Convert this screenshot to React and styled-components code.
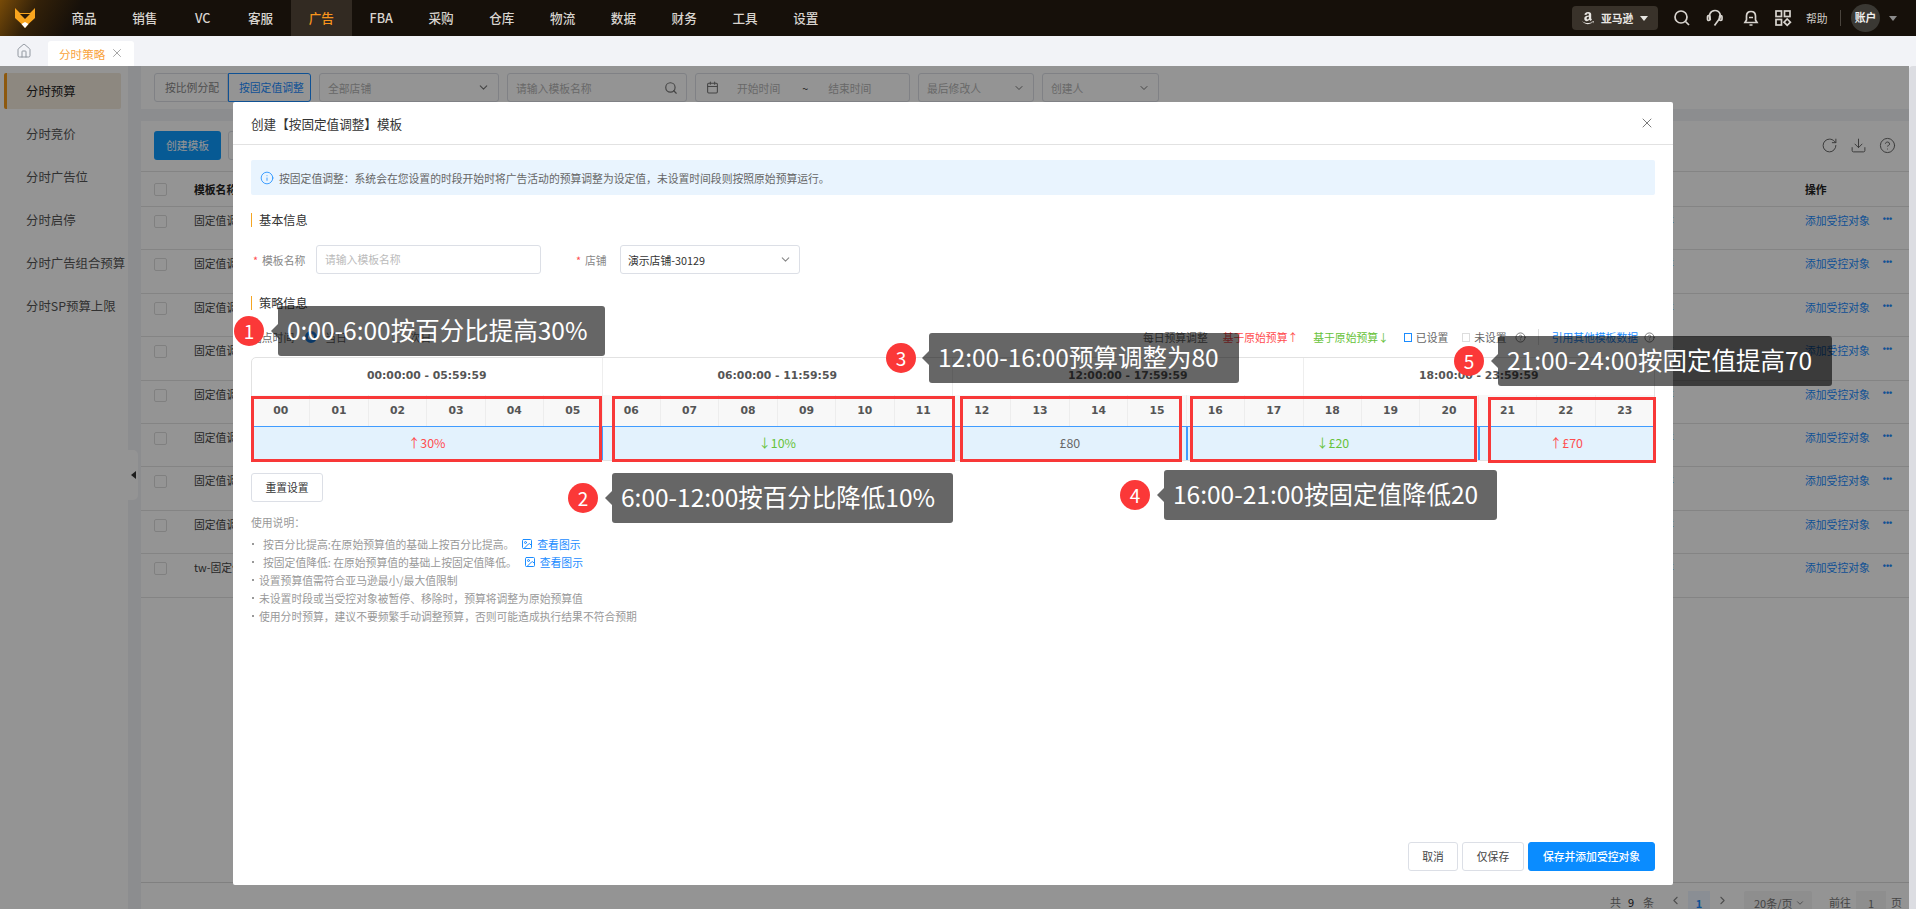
import React from "react";
import styled, { createGlobalStyle } from "styled-components";
import {
  Calendar,
  ChevronDown,
  ChevronLeft,
  ChevronRight,
  CircleHelp,
  Download,
  House,
  Image as ImageIcon,
  Info,
  RotateCw,
  Search,
  X
} from "lucide-react";
import { FaAmazon } from "react-icons/fa";

const GlobalStyle = createGlobalStyle`
  html, body {
    margin: 0;
    padding: 0;
    height: 100%;
    overflow: hidden;
    background: #f2f3f7;
  }
  body {
    font-family: "Noto Sans CJK SC", "Noto Sans", sans-serif;
    font-size: 10.8px;
    color: #333;
  }
  * { box-sizing: border-box; }
`;

const Page = styled.div`
  position: relative;
  width: 1916px;
  height: 909px;
  display: flex;
  flex-direction: column;
  overflow: hidden;
`;

/* top navigation */
const TopBar = styled.header`
  height: 36px;
  flex: none;
  display: flex;
  align-items: center;
  color: #d8d4cf;
  background:
    linear-gradient(118deg, rgba(125, 78, 8, 0.95) 0, rgba(70, 44, 8, 0.6) 34px, rgba(23, 16, 8, 0) 74px),
    #16100a;
`;

const Logo = styled.svg`
  width: 20px;
  height: 20px;
  margin-left: 15px;
  margin-right: 18.6px;
  flex: none;
`;

const NavItem = styled.div`
  min-width: 55px;
  padding: 0 17.8px;
  height: 36px;
  line-height: 36px;
  text-align: center;
  font-size: 12.6px;
  font-weight: 500;
  color: ${p => (p.$active ? "#f7941d" : "#d8d4cf")};
  background: ${p => (p.$active ? "#322a22" : "transparent")};
`;

const TopRight = styled.div`
  margin-left: auto;
  display: flex;
  align-items: center;
  height: 36px;
`;

const PlatformPill = styled.div`
  width: 86px;
  height: 24px;
  margin-right: 15px;
  border-radius: 4px;
  background: #39322a;
  display: flex;
  align-items: center;
  padding-left: 9px;
  color: #e8e6e2;
  font-size: 10.8px;
  font-weight: 700;
`;

const PillLabel = styled.span`
  margin: 0 7px 0 6px;
`;

const Caret = styled.i`
  display: block;
  width: 0;
  height: 0;
  border-left: 4px solid transparent;
  border-right: 4px solid transparent;
  border-top: 5px solid ${p => p.$color || "#e8e6e2"};
`;

const TopIcon = styled.svg`
  width: 18px;
  height: 18px;
  margin-right: ${p => p.$gap}px;
  fill: none;
  stroke: #d8d4cf;
  stroke-width: 1.7;
  flex: none;
`;

const HelpText = styled.span`
  color: #cfcbc6;
  font-size: 10.8px;
  width: 23px;
`;

const TopDivider = styled.i`
  width: 1px;
  height: 16px;
  background: #4a443d;
  margin: 0 10px 0 11px;
`;

const Avatar = styled.div`
  width: 29px;
  height: 28px;
  border-radius: 50%;
  background: #3a3833;
  text-align: center;
  line-height: 26px;
  font-size: 10.8px;
  font-weight: 700;
  color: #eee;
  margin-right: 9px;
`;

const AvatarSlot = styled.div`
  width: 27px;
`;

/* tab strip */
const TabBar = styled.div`
  height: 30px;
  flex: none;
  display: flex;
  align-items: flex-end;
  background: #f2f3f7;
  color: #8a9099;
`;

const HomeSlot = styled.div`
  width: 48px;
  height: 30px;
  display: flex;
  align-items: center;
  justify-content: center;
`;

const Tab = styled.div`
  width: 86px;
  height: 25px;
  background: #fff;
  border-radius: 3px 3px 0 0;
  color: #f9a33c;
  font-size: 11.6px;
  display: flex;
  align-items: center;
  padding-left: 11px;
  gap: 5px;
  svg { color: #8b8b8b; margin-top: -2px; }
`;

/* page behind the dialog */
const Body = styled.div`
  flex: 1;
  display: flex;
  min-height: 0;
`;

const Sidebar = styled.nav`
  width: 128px;
  flex: none;
  background: #fff;
  padding: 7px 0 0 4px;
  display: flex;
  flex-direction: column;
  gap: 7px;
`;

const SideItem = styled.div`
  width: 117px;
  height: 36px;
  line-height: 36px;
  font-size: 12.4px;
  white-space: nowrap;
  padding-left: ${p => (p.$active ? "19px" : "22px")};
  color: ${p => (p.$active ? "#222" : "#555")};
  background: ${p => (p.$active ? "#f3eadc" : "transparent")};
  border-left: ${p => (p.$active ? "3px solid #f39a1a" : "0")};
  border-radius: 2px;
`;

const CollapseHandle = styled.div`
  position: absolute;
  left: 128px;
  top: 450px;
  width: 10px;
  height: 50px;
  background: #fff;
  border-radius: 0 5px 5px 0;
  display: flex;
  align-items: center;
  justify-content: center;
`;

const CollapseArrow = styled.i`
  width: 0;
  height: 0;
  border-top: 4px solid transparent;
  border-bottom: 4px solid transparent;
  border-right: 5px solid #333;
`;

const Main = styled.main`
  flex: 1;
  margin-left: 13px;
  min-width: 0;
  display: flex;
  flex-direction: column;
`;

const FilterBar = styled.div`
  height: 43px;
  flex: none;
  background: #fff;
  padding: 7px 13px;
  display: flex;
`;

const Toggle = styled.div`
  height: 29px;
  line-height: 27px;
  padding: 0 10px;
  font-size: 10.8px;
  border: 1px solid ${p => (p.$on ? "#1a8cff" : "#dcdfe6")};
  color: ${p => (p.$on ? "#1a8cff" : "#888")};
  border-radius: ${p => (p.$on ? "0 3px 3px 0" : "3px 0 0 3px")};
  width: ${p => p.$w}px;
  white-space: nowrap;
`;

const Field = styled.div`
  width: ${p => p.$w}px;
  margin-left: 8px;
  height: 29px;
  border: 1px solid #dcdfe6;
  border-radius: 3px;
  padding: 0 8px;
  display: flex;
  align-items: center;
  justify-content: space-between;
  color: #b5b5b5;
  font-size: 10.8px;
  svg { color: #777; flex: none; }
`;

const DateField = styled(Field)`
  justify-content: flex-start;
  padding-left: 10px;
  color: #b5b5b5;
`;

const DateText = styled.span`
  margin-left: ${p => p.$gap}px;
  color: ${p => (p.$dark ? "#444" : "#b5b5b5")};
`;

const ListPanel = styled.section`
  margin-top: 12px;
  flex: 1;
  min-height: 0;
  background: #fff;
  display: flex;
  flex-direction: column;
`;

const ListTools = styled.div`
  height: 50px;
  flex: none;
  padding: 10px 13px 0;
  display: flex;
  gap: 7px;
  color: #666;
`;

const CreateButton = styled.div`
  width: 67px;
  height: 29px;
  border-radius: 3px;
  background: #0d9bff;
  color: #fff;
  font-size: 10.8px;
  line-height: 29px;
  text-align: center;
`;

const GhostButton = styled.div`
  width: 67px;
  height: 29px;
  border: 1px solid #dcdfe6;
  border-radius: 3px;
`;

const ToolIcons = styled.div`
  margin-left: auto;
  display: flex;
  align-items: center;
  height: 29px;
  gap: 12px;
  color: #666;
`;

const Row = styled.div`
  height: ${p => (p.$head ? "35px" : "43.4px")};
  flex: none;
  border-top: 1px solid #e4e4e4;
  display: flex;
  align-items: ${p => (p.$head ? "center" : "flex-start")};
  padding-left: 13px;
  padding-top: ${p => (p.$head ? "0" : "5px")};
  font-size: 10.8px;
  font-weight: ${p => (p.$head ? 700 : 400)};
  color: ${p => (p.$head ? "#222" : "#444")};
`;

const Check = styled.i`
  display: block;
  width: 13px;
  height: 13px;
  border: 1px solid #ddd;
  border-radius: 2px;
  flex: none;
  margin-top: ${p => (p.$head ? "0" : "3px")};
`;

const NameCell = styled.div`
  margin-left: 27px;
  width: 1469px;
  flex: none;
  white-space: nowrap;
`;

const LinkStub = styled.span`
  width: 12px;
  flex: none;
  color: #1a8cff;
  white-space: nowrap;
`;

const ActionCell = styled.div`
  margin-left: 130px;
  display: flex;
  align-items: flex-start;
  color: ${p => (p.$head ? "inherit" : "#1a8cff")};
  white-space: nowrap;
`;

const Dots = styled.span`
  margin: 2px 0 0 13px;
  font-family: "Liberation Sans", sans-serif;
  font-size: 9px;
  font-weight: 700;
  line-height: 10px;
`;

const TableEnd = styled.div`
  border-top: 1px solid #e4e4e4;
`;

const Pagination = styled.div`
  height: 27px;
  flex: none;
  background: #fff;
  border-top: 1px solid #dcdcdc;
  display: flex;
  align-items: flex-start;
  justify-content: flex-end;
  padding: 8px 7px 0 0;
  font-size: 11px;
  color: #777;
`;

const PageText = styled.span`
  margin-top: 3px;
  margin-left: ${p => p.$gap || 0}px;
  color: ${p => (p.$dark ? "#222" : "#777")};
`;

const PageBtn = styled.div`
  width: 22px;
  height: 24px;
  margin: 0 6px;
  background: #eef5ff;
  color: #1a8cff;
  font-weight: 700;
  text-align: center;
  line-height: 24px;
`;

const PageSelect = styled.div`
  width: 68px;
  height: 24px;
  margin: 0 17px 0 15px;
  background: #f4f4f5;
  display: flex;
  align-items: center;
  gap: 2px;
  padding-left: 10px;
  border-radius: 2px;
`;

const PageInput = styled.div`
  width: 30px;
  height: 24px;
  margin: 0 5px;
  background: #f4f4f5;
  text-align: center;
  line-height: 24px;
`;

const PageSlot = styled.div`
  margin: 3px 0 0 ${p => p.$gap}px;
  color: #888;
`;

const ScrollTrack = styled.div`
  width: 7px;
  flex: none;
  background: #dcdde2;
  border-radius: 4px 0 0 0;
`;

/* dialog */
const Overlay = styled.div`
  position: absolute;
  left: 0;
  right: 7px;
  top: 66px;
  bottom: 0;
  background: rgba(0, 0, 0, 0.42);
`;

const Dialog = styled.div`
  position: absolute;
  left: 233px;
  top: 102px;
  width: 1440px;
  height: 783px;
  background: #fff;
  border-radius: 2px;
  display: flex;
  flex-direction: column;
  padding: 0 18px 14px;
`;

const DialogHead = styled.div`
  height: 43px;
  flex: none;
  margin: 0 -18px;
  padding: 0 18px;
  border-bottom: 1px solid #e2e2e2;
  display: flex;
  align-items: center;
  justify-content: space-between;
  font-size: 12.6px;
  color: #333;
  svg { color: #666; }
`;

const Alert = styled.div`
  margin-top: 15px;
  height: 35px;
  flex: none;
  background: #e9f4fe;
  display: flex;
  align-items: center;
  padding-left: 9px;
  gap: 5px;
  font-size: 10.8px;
  color: #666;
  border-radius: 2px;
  svg { color: #1a8cff; }
`;

const SectionTitle = styled.div`
  margin-top: ${p => p.$top}px;
  height: 14px;
  line-height: 14px;
  flex: none;
  border-left: 1.5px solid #f5a623;
  padding-left: 7px;
  font-size: 12.2px;
  color: #333;
`;

const FormRow = styled.div`
  margin-top: 18px;
  display: flex;
  align-items: center;
  flex: none;
`;

const Label = styled.label`
  width: ${p => p.$w}px;
  font-size: 10.8px;
  color: #888;
  white-space: nowrap;
  &::before {
    content: "*";
    color: #ff4d4f;
    margin: 0 4px 0 2px;
  }
`;

const TextInput = styled.div`
  width: 225px;
  height: 29px;
  border: 1px solid #dcdfe6;
  border-radius: 3px;
  padding-left: 8px;
  line-height: 27px;
  font-size: 10.8px;
  color: #bbb;
  margin-right: 33px;
`;

const StoreSelect = styled.div`
  width: 180px;
  height: 29px;
  border: 1px solid #dcdfe6;
  border-radius: 3px;
  padding: 0 7px;
  display: flex;
  align-items: center;
  justify-content: space-between;
  font-size: 10.8px;
  color: #333;
  svg { color: #888; }
`;

const LegendRow = styled.div`
  margin-top: 15px;
  height: 24px;
  flex: none;
  display: flex;
  align-items: center;
  justify-content: space-between;
  font-size: 10.8px;
`;

const LegendSide = styled.div`
  display: flex;
  align-items: center;
`;

const LegendText = styled.span`
  color: ${p => p.$color || "#666"};
  margin-left: ${p => p.$gap || 0}px;
  white-space: nowrap;
`;

const Radio = styled.i`
  display: block;
  width: 12px;
  height: 12px;
  border-radius: 50%;
  margin-left: ${p => p.$gap}px;
  border: ${p => (p.$on ? "3px solid #1a8cff" : "1px solid #ccc")};
`;

const Swatch = styled.i`
  display: block;
  width: 8px;
  height: 9px;
  margin-left: ${p => p.$gap}px;
  border: 1.5px solid ${p => p.$color};
`;

const LegendDivider = styled.i`
  width: 1px;
  height: 16px;
  background: #ddd;
  margin: 0 13px 0 12px;
`;

const HelpIcon = styled(CircleHelp)`
  color: #777;
  margin-left: ${p => p.$gap}px;
  flex: none;
`;

const Schedule = styled.div`
  margin-top: 8px;
  flex: none;
  border: 1px solid #e2e2e2;
  border-radius: 5px 5px 2px 2px;
  height: 104px;
  overflow: hidden;
`;

const GroupRow = styled.div`
  display: grid;
  grid-template-columns: repeat(4, 1fr);
  height: 37px;
`;

const GroupCell = styled.div`
  border-right: 1px solid #eee;
  font-family: "DejaVu Sans", sans-serif;
  font-weight: 700;
  font-size: 10.8px;
  color: #555;
  text-align: center;
  line-height: 36px;
  &:last-child { border-right: 0; }
`;

const HourRow = styled.div`
  display: grid;
  grid-template-columns: repeat(24, 1fr);
  height: 31px;
  background: #f8f8f8;
`;

const HourCell = styled.div`
  border-right: 1px solid #ededed;
  font-family: "DejaVu Sans", sans-serif;
  font-weight: 700;
  font-size: 10.8px;
  color: #555;
  text-align: center;
  line-height: 31px;
  &:last-child { border-right: 0; }
`;

const ValueRow = styled.div`
  display: grid;
  grid-template-columns: repeat(24, 1fr);
  height: 35px;
`;

const Segment = styled.div`
  grid-column: span ${p => p.$span};
  background: #e3f2fd;
  border: 1px solid #409cff;
  border-left-width: ${p => (p.$first ? 0 : 1)}px;
  text-align: center;
  line-height: 33px;
  font-size: 12.4px;
  color: ${p => p.$color};
`;

const ResetButton = styled.div`
  margin-top: 12px;
  flex: none;
  width: 72px;
  height: 29px;
  border: 1px solid #dcdfe6;
  border-radius: 3px;
  text-align: center;
  line-height: 27px;
  font-size: 10.8px;
  color: #333;
`;

const UsageTitle = styled.div`
  margin-top: 11px;
  height: 18px;
  line-height: 18px;
  font-size: 10.8px;
  color: #999;
  flex: none;
`;

const UsageList = styled.ul`
  margin: 4px 0 0;
  padding: 0;
  list-style: none;
  flex: none;
`;

const UsageItem = styled.li`
  height: 18px;
  line-height: 18px;
  font-size: 10.8px;
  color: #999;
  display: flex;
  align-items: center;
  &::before {
    content: "";
    flex: none;
    width: 2px;
    height: 2px;
    background: #999;
    margin: 0 ${p => (p.$wide ? "9px" : "5px")} 0 1px;
  }
`;

const ViewLink = styled.span`
  display: inline-flex;
  align-items: center;
  gap: 4px;
  margin-left: 7px;
  color: #1a8cff;
`;

const DialogFoot = styled.div`
  margin-top: auto;
  display: flex;
  justify-content: flex-end;
  gap: 4px;
`;

const FootButton = styled.div`
  width: ${p => p.$w}px;
  height: 29px;
  border: 1px solid ${p => (p.$primary ? "#0a8cff" : "#dcdfe6")};
  background: ${p => (p.$primary ? "#0a8cff" : "#fff")};
  color: ${p => (p.$primary ? "#fff" : "#444")};
  font-weight: ${p => (p.$primary ? 500 : 400)};
  border-radius: 3px;
  text-align: center;
  line-height: 27px;
  font-size: 10.8px;
`;

/* red annotations drawn on top of the screenshot */
const RedBox = styled.div`
  position: absolute;
  left: ${p => p.$x}px;
  top: ${p => p.$y}px;
  width: ${p => p.$w}px;
  height: ${p => p.$h}px;
  border: 3px solid #f83838;
`;

const Callout = styled.div`
  position: absolute;
  left: ${p => p.$x}px;
  top: ${p => p.$y}px;
  width: ${p => p.$w}px;
  height: 50px;
  padding-left: 9px;
  border-radius: 3px;
  background: rgba(0, 0, 0, 0.6);
  color: #fff;
  font-size: 24.5px;
  line-height: 48px;
  white-space: nowrap;
  &::before {
    content: "";
    position: absolute;
    left: -7px;
    top: 18px;
    border-top: 7px solid transparent;
    border-bottom: 7px solid transparent;
    border-right: 7px solid rgba(0, 0, 0, 0.6);
  }
`;

const Badge = styled.div`
  position: absolute;
  left: ${p => p.$x}px;
  top: ${p => p.$y}px;
  width: 30px;
  height: 30px;
  border-radius: 50%;
  background: #fb3838;
  color: #fff;
  font-size: 19px;
  line-height: 29px;
  text-align: center;
`;

const navItems = ["商品", "销售", "VC", "客服", "广告", "FBA", "采购", "仓库", "物流", "数据", "财务", "工具", "设置"];
const sideItems = ["分时预算", "分时竞价", "分时广告位", "分时启停", "分时广告组合预算", "分时SP预算上限"];
const rowNames = ["固定值调整模板", "固定值调整模板", "固定值调整模板", "固定值调整模板", "固定值调整模板", "固定值调整模板", "固定值调整模板", "固定值调整模板", "tw-固定值调整"];
const groups = ["00:00:00 - 05:59:59", "06:00:00 - 11:59:59", "12:00:00 - 17:59:59", "18:00:00 - 23:59:59"];
const hours = Array.from({ length: 24 }, (_, i) => String(i).padStart(2, "0"));
const segments = [
  { span: 6, text: "↑30%", color: "#ff4d4f" },
  { span: 6, text: "↓10%", color: "#67c23a" },
  { span: 4, text: "£80", color: "#666" },
  { span: 5, text: "↓£20", color: "#67c23a" },
  { span: 3, text: "↑£70", color: "#ff4d4f" }
];
const boxes = [
  { x: 251, y: 396, w: 351, h: 66 },
  { x: 612, y: 396, w: 343, h: 66 },
  { x: 960, y: 396, w: 222, h: 66 },
  { x: 1190, y: 396, w: 287, h: 66 },
  { x: 1488, y: 397, w: 168, h: 66 }
];
const callouts = [
  { x: 278, y: 306, w: 327, bx: 234, by: 316, n: 1, text: "0:00-6:00按百分比提高30%" },
  { x: 612, y: 473, w: 341, bx: 568, by: 483, n: 2, text: "6:00-12:00按百分比降低10%" },
  { x: 929, y: 333, w: 310, bx: 886, by: 343, n: 3, text: "12:00-16:00预算调整为80" },
  { x: 1164, y: 470, w: 333, bx: 1120, by: 480, n: 4, text: "16:00-21:00按固定值降低20" },
  { x: 1498, y: 336, w: 334, bx: 1454, by: 346, n: 5, text: "21:00-24:00按固定值提高70" }
];

const App = () => (
  <Page>
    <GlobalStyle />
    <TopBar>
      <Logo viewBox="0 0 20 20">
        <path d="M0 0 L5 5 H15 L20 0 V10 L14 15.5 L10 20 L6 15.5 L0 10 Z" fill="#f9a51e" />
        <path d="M5 6 H15 L10 11 Z" fill="#2a1a08" />
        <path d="M6.5 16 L10 14 L13.5 16 L10 20 Z" fill="#fff" />
      </Logo>
      {navItems.map(item => (
        <NavItem key={item} $active={item === "广告"}>{item}</NavItem>
      ))}
      <TopRight>
        <PlatformPill>
          <FaAmazon size={14} />
          <PillLabel>亚马逊</PillLabel>
          <Caret />
        </PlatformPill>
        <TopIcon viewBox="0 0 18 18" $gap={15}>
          <circle cx="8" cy="8" r="6" />
          <path d="M12.5 12.5 L16 16" />
        </TopIcon>
        <TopIcon viewBox="0 0 18 18" $gap={18}>
          <path d="M4.5 11 C2 7 4 1.5 9 1.5 C14 1.5 16 7 12.5 11 L8.5 16.5" />
          <rect x="1.5" y="6.5" width="2.5" height="5" rx="1.2" />
          <rect x="13.5" y="6.5" width="2.5" height="5" rx="1.2" />
        </TopIcon>
        <TopIcon viewBox="0 0 18 18" $gap={14}>
          <path d="M3 13.5 H15 L13.5 11 V7 C13.5 4 11.5 2.5 9 2.5 C6.5 2.5 4.5 4 4.5 7 V11 Z" />
          <path d="M7 8.5 H11 M7.5 16 H10.5" />
        </TopIcon>
        <TopIcon viewBox="0 0 18 18" $gap={14}>
          <rect x="2" y="2" width="5.5" height="5.5" />
          <rect x="10.5" y="2" width="5.5" height="5.5" />
          <rect x="2" y="10.5" width="5.5" height="5.5" />
          <path d="M13.2 10 L16.4 13.2 L13.2 16.4 L10 13.2 Z" />
        </TopIcon>
        <HelpText>帮助</HelpText>
        <TopDivider />
        <Avatar>账户</Avatar>
        <AvatarSlot><Caret $color="#8b8b8b" /></AvatarSlot>
      </TopRight>
    </TopBar>

    <TabBar>
      <HomeSlot><House size={16} strokeWidth={1.4} /></HomeSlot>
      <Tab>
        分时策略
        <X size={14} strokeWidth={1.3} />
      </Tab>
    </TabBar>

    <Body>
      <Sidebar>
        {sideItems.map((item, i) => (
          <SideItem key={item} $active={i === 0}>{item}</SideItem>
        ))}
      </Sidebar>
      <CollapseHandle><CollapseArrow /></CollapseHandle>
      <Main>
        <FilterBar>
          <Toggle $w={74}>按比例分配</Toggle>
          <Toggle $on $w={83}>按固定值调整</Toggle>
          <Field $w={180}>全部店铺<ChevronDown size={13} /></Field>
          <Field $w={180}>请输入模板名称<Search size={14} /></Field>
          <DateField $w={215}>
            <Calendar size={13} />
            <DateText $gap={18}>开始时间</DateText>
            <DateText $gap={22} $dark>~</DateText>
            <DateText $gap={20}>结束时间</DateText>
          </DateField>
          <Field $w={116}>最后修改人<ChevronDown size={12} /></Field>
          <Field $w={117}>创建人<ChevronDown size={12} /></Field>
        </FilterBar>
        <ListPanel>
          <ListTools>
            <CreateButton>创建模板</CreateButton>
            <GhostButton />
            <ToolIcons>
              <RotateCw size={17} strokeWidth={1.4} />
              <Download size={17} strokeWidth={1.4} />
              <CircleHelp size={17} strokeWidth={1.4} />
            </ToolIcons>
          </ListTools>
          <Row $head>
            <Check $head />
            <NameCell>模板名称</NameCell>
            <LinkStub />
            <ActionCell $head>操作</ActionCell>
          </Row>
          {rowNames.map((name, i) => (
            <Row key={i}>
              <Check />
              <NameCell>{name}</NameCell>
              <LinkStub>详</LinkStub>
              <ActionCell>添加受控对象<Dots>•••</Dots></ActionCell>
            </Row>
          ))}
          <TableEnd />
        </ListPanel>
        <Pagination>
          <PageText>共</PageText>
          <PageText $gap={7} $dark>9</PageText>
          <PageText $gap={9}>条</PageText>
          <PageSlot $gap={15}><ChevronLeft size={13} /></PageSlot>
          <PageBtn>1</PageBtn>
          <PageSlot $gap={0}><ChevronRight size={13} /></PageSlot>
          <PageSelect>20条/页<ChevronDown size={10} /></PageSelect>
          <PageText>前往</PageText>
          <PageInput>1</PageInput>
          <PageText>页</PageText>
        </Pagination>
      </Main>
      <ScrollTrack />
    </Body>

    <Overlay />

    <Dialog>
      <DialogHead>
        创建【按固定值调整】模板
        <X size={16} strokeWidth={1.3} />
      </DialogHead>
      <Alert>
        <Info size={14} strokeWidth={1.4} />
        按固定值调整：系统会在您设置的时段开始时将广告活动的预算调整为设定值，未设置时间段则按照原始预算运行。
      </Alert>
      <SectionTitle $top={18}>基本信息</SectionTitle>
      <FormRow>
        <Label $w={65}>模板名称</Label>
        <TextInput>请输入模板名称</TextInput>
        <Label $w={46}>店铺</Label>
        <StoreSelect>演示店铺-30129<ChevronDown size={13} /></StoreSelect>
      </FormRow>
      <SectionTitle $top={22}>策略信息</SectionTitle>
      <LegendRow>
        <LegendSide>
          <LegendText>站点时间</LegendText>
          <Radio $on $gap={11} />
          <LegendText $gap={8}>当日</LegendText>
          <Radio $gap={45} />
          <LegendText $gap={6}>次日</LegendText>
        </LegendSide>
        <LegendSide>
          <LegendText>每日预算调整</LegendText>
          <LegendText $gap={15} $color="#ff4d4f">基于原始预算↑</LegendText>
          <LegendText $gap={15} $color="#67c23a">基于原始预算↓</LegendText>
          <Swatch $gap={15} $color="#1a8cff" />
          <LegendText $gap={4}>已设置</LegendText>
          <Swatch $gap={14} $color="#ddd" />
          <LegendText $gap={4}>未设置</LegendText>
          <HelpIcon size={11} $gap={8} />
          <LegendDivider />
          <LegendText $color="#1a8cff">引用其他模板数据</LegendText>
          <HelpIcon size={11} $gap={6} />
        </LegendSide>
      </LegendRow>
      <Schedule>
        <GroupRow>
          {groups.map(group => <GroupCell key={group}>{group}</GroupCell>)}
        </GroupRow>
        <HourRow>
          {hours.map(hour => <HourCell key={hour}>{hour}</HourCell>)}
        </HourRow>
        <ValueRow>
          {segments.map((seg, i) => (
            <Segment key={seg.text} $span={seg.span} $color={seg.color} $first={i < 2}>{seg.text}</Segment>
          ))}
        </ValueRow>
      </Schedule>
      <ResetButton>重置设置</ResetButton>
      <UsageTitle>使用说明：</UsageTitle>
      <UsageList>
        <UsageItem $wide>按百分比提高:在原始预算值的基础上按百分比提高。<ViewLink><ImageIcon size={12} />查看图示</ViewLink></UsageItem>
        <UsageItem $wide>按固定值降低: 在原始预算值的基础上按固定值降低。<ViewLink><ImageIcon size={12} />查看图示</ViewLink></UsageItem>
        <UsageItem>设置预算值需符合亚马逊最小/最大值限制</UsageItem>
        <UsageItem>未设置时段或当受控对象被暂停、移除时，预算将调整为原始预算值</UsageItem>
        <UsageItem>使用分时预算，建议不要频繁手动调整预算，否则可能造成执行结果不符合预期</UsageItem>
      </UsageList>
      <DialogFoot>
        <FootButton $w={50}>取消</FootButton>
        <FootButton $w={62}>仅保存</FootButton>
        <FootButton $w={127} $primary>保存并添加受控对象</FootButton>
      </DialogFoot>
    </Dialog>

    {boxes.map(box => (
      <RedBox key={box.x} $x={box.x} $y={box.y} $w={box.w} $h={box.h} />
    ))}
    {callouts.map(c => (
      <React.Fragment key={c.n}>
        <Callout $x={c.x} $y={c.y} $w={c.w}>{c.text}</Callout>
        <Badge $x={c.bx} $y={c.by}>{c.n}</Badge>
      </React.Fragment>
    ))}
  </Page>
);

export default App;
